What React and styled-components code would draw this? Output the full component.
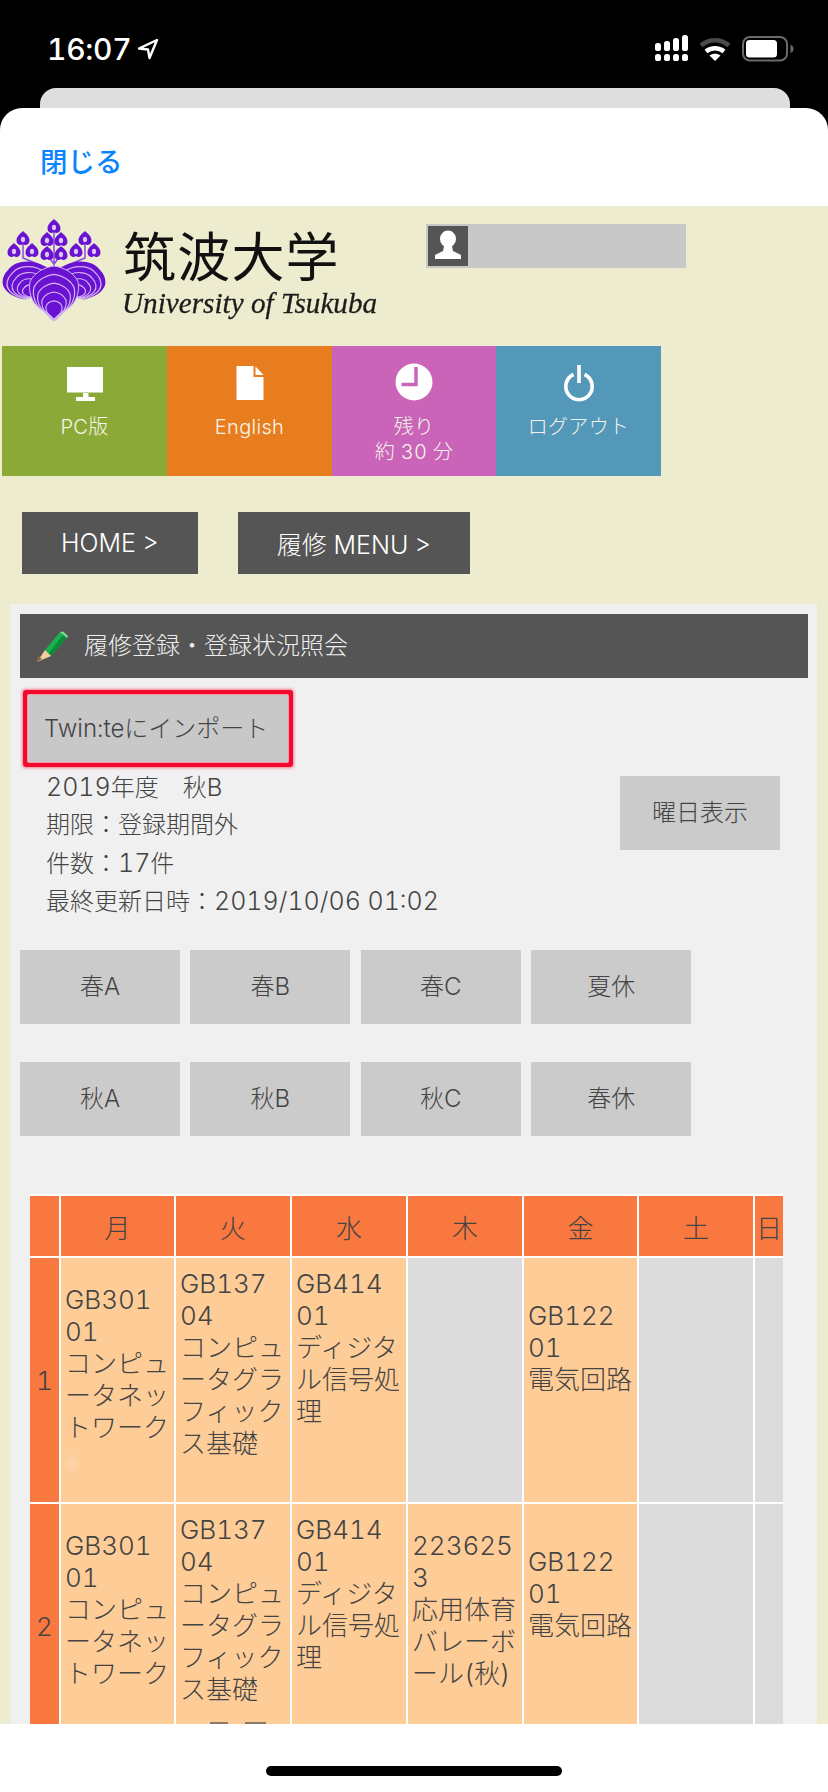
import React from "react";
import styled, { createGlobalStyle } from "styled-components";

const Global = createGlobalStyle`
  html, body { margin: 0; padding: 0; background: #000; }
  * { box-sizing: border-box; }
  body { font-family: Inter, "Noto Sans CJK JP", sans-serif; font-variant-numeric: tabular-nums; }
`;

const Phone = styled.div`
  width: 828px; height: 1792px; background: #000; display: flex; flex-direction: column; overflow: hidden;
`;
const StatusBar = styled.div`
  height: 88px; display: flex; justify-content: space-between; align-items: flex-start; padding: 0 34px 0 47px;
`;
const Clock = styled.div`
  display: flex; align-items: center; gap: 6px; margin-top: 31px; color: #fff;
  font: 500 30px/36px Inter, sans-serif; font-variant-numeric: tabular-nums; letter-spacing: -0.3px;
`;
const StatusIcons = styled.div`
  display: flex; align-items: flex-start; gap: 11px; margin-top: 35px;
`;
const BackCard = styled.div`
  height: 20px; margin: 0 38px 0 40px; background: #dedede; border-radius: 16px 16px 0 0;
`;
const Sheet = styled.div`
  flex: 1; min-height: 0; display: flex; flex-direction: column; background: #fff; border-radius: 22px 22px 0 0; overflow: hidden;
`;
const CloseBar = styled.div`
  height: 98px; flex: none; padding: 33px 0 0 40px;
`;
const CloseLink = styled.span`
  font: 500 27.5px/38px "Noto Sans CJK JP", sans-serif; color: #0a84ff;
`;
const Web = styled.div`
  flex: 1; min-height: 0; overflow: hidden; background: #eeecce;
`;
const HomeArea = styled.div`
  height: 68px; flex: none; display: flex; justify-content: center; padding-top: 42px;
`;
const HomeBar = styled.div`
  width: 296px; height: 10px; border-radius: 5px; background: #000;
`;

const Masthead = styled.div`
  height: 140px; display: flex; align-items: flex-start; padding-left: 2px;
`;
const Brand = styled.div`
  width: 424px; display: flex; margin-top: 12px; filter: blur(0.4px);
`;
const BrandText = styled.div`
  margin-left: 17px; color: #1a1a1a;
`;
const BrandJa = styled.div`
  font: 400 53px/58px "Noto Sans CJK JP", sans-serif; margin-top: 7px; letter-spacing: 1.2px; color: #111;
`;
const BrandEn = styled.div`
  font: italic 400 29.2px/30px "Liberation Serif", serif; margin-top: 5px; margin-left: -1px; color: #1c1c1c; white-space: nowrap; -webkit-text-stroke: 0.3px #1c1c1c;
`;
const UserBox = styled.div`
  width: 260px; height: 44px; margin-top: 18px; background: #c8c8c8; padding: 2px;
`;
const UserIcon = styled.div`
  width: 40px; height: 40px; background: #555;
  svg { display: block; }
`;

const Tiles = styled.div`
  display: flex; height: 130px; padding-left: 2px;
`;
const Tile = styled.div`
  width: ${p => p.$w}px; background: ${p => p.$bg}; display: flex; flex-direction: column; align-items: center; padding-top: 17px;
  color: #f6f4e8; font-size: 20px; line-height: 25px; text-align: center; font-weight: 300; letter-spacing: .3px;
  svg { display: block; margin-bottom: 12px; }
`;

const NavRow = styled.div`
  display: flex; gap: 40px; padding: 36px 0 30px 22px;
`;
const NavButton = styled.div`
  width: ${p => p.$w}px; height: 62px; background: #555; color: #fff; display: flex; align-items: center; justify-content: center;
  font-size: 25px; font-weight: 300;
`;

const Panel = styled.div`
  margin: 0 11px 0 10px; background: #f0f0f0; padding: 10px 9px 0 10px; color: #444;
`;
const PanelHeader = styled.div`
  height: 64px; background: #555; color: #eee; display: flex; align-items: center; padding-left: 16px; gap: 16px;
  font-size: 24px; font-weight: 300;
`;
const PanelTitle = styled.span`
  margin-bottom: 5px;
`;
const TwinButton = styled.div`
  width: 260px; height: 67px; margin: 17px 0 6px 8px; background: #c8c8c8; display: flex; align-items: center; padding: 0 0 5px 16px;
  font-size: 24px; white-space: nowrap; font-weight: 300; border-radius: 1px;
  box-shadow: 0 0 0 1px #f79aa8, 0 0 0 5px #f20a2e, 0 0 3px 6px rgba(255, 50, 80, .6);
`;
const InfoRow = styled.div`
  display: flex; justify-content: space-between; align-items: flex-start; padding: 0 28px 0 26px; height: 182px;
`;
const InfoLines = styled.div`
  font-size: 24px; line-height: 38px; font-weight: 300; white-space: pre;
`;
const InfoLine = styled.div`
  height: 38px;
`;
const Latin = styled.span`
  font-size: 25px;
`;
const GrayButton = styled.div`
  width: 160px; height: 74px; background: #cbcbcb; display: flex; align-items: center; justify-content: center; padding-bottom: 5px;
  font-size: 24px; font-weight: 300; color: #444;
`;
const DayToggle = styled(GrayButton)`
  margin-top: 8px;
`;
const SeasonRow = styled.div`
  display: flex; gap: 10.4px; margin-bottom: 38px;
`;

const Timetable = styled.div`
  margin: 58px 0 0 10px; width: 753px; background: #fff; padding-top: 2px; display: grid; gap: 2px;
  grid-template-columns: 29px 113px 114px 114px 114px 113px 114px 28px;
  grid-template-rows: 60px 244px 244px;
  font-size: 26px; color: #444; font-weight: 300;
`;
const HeadCell = styled.div`
  background: #f8783f; display: flex; align-items: center; justify-content: center; overflow: hidden; white-space: nowrap;
`;
const Cell = styled.div`
  position: relative; background: ${p => (p.$filled ? "#fecc96" : "#dcdcdc")}; display: flex; flex-direction: column; justify-content: center; padding-left: 4px; line-height: 32px; white-space: nowrap; overflow: hidden;
`;
const CellLine = styled.div`
  height: 32px;
`;
const Blotch = styled.div`
  position: absolute; left: 2px; top: 192px; width: 18px; height: 26px;
  background: radial-gradient(closest-side, #fed6ad, rgba(254, 204, 150, 0));
`;
const Smudge = styled.div`
  position: absolute; left: 34px; top: 218px; width: 56px; height: 2px;
  background: linear-gradient(90deg, #8a7a68 0 32%, transparent 32% 62%, #8a7a68 62% 100%);
`;

const tuftPath = (x, y) =>
  `M${x} ${y - 8}C${x + 2.5} ${y - 5.5} ${x + 7} ${y - 3} ${x + 6.4} ${y + 2.5}C${x + 6} ${y + 6} ${x + 2} ${y + 7} ${x} ${y + 5}C${x - 2} ${y + 7} ${x - 6} ${y + 6} ${x - 6.4} ${y + 2.5}C${x - 7} ${y - 3} ${x - 2.5} ${y - 5.5} ${x} ${y - 8}Z`;
const Tuft = ({ x, y }) => (
  <g>
    <path d={tuftPath(x, y)} fill="#6a12d2" />
    <ellipse cx={x} cy={y + 0.5} rx="2.1" ry="2.8" fill="#dcc4f5" />
  </g>
);
const leaf = "M54 111C49 108 45 101 39 98C32 93 28 81 30 72C34 62 46 57 54 56C62 57 74 62 78 72C80 81 76 93 69 98C63 101 59 108 54 111Z";
const side = "M47 58C35 49 16 49 8 60C2 66 1 74 5 79C9 85 16 87 22 89C28 90 31 88 34 84C37 76 43 66 47 58Z";
const Nested = ({ d, ox, oy, scales }) => scales.map(s => (
  <path key={s} d={d} fill="none" stroke="#d2b3f3" strokeWidth={1.2 / s} transform={`translate(${ox} ${oy}) scale(${s}) translate(${-ox} ${-oy})`} />
));
const LogoMark = () => (
  <svg width="104" height="104" viewBox="2 8 104 104" style={{ flex: "none" }}>
    <path d="M54 58V22M47 45L54 54L61 45M23 30V48L47 58M85 30V48L61 58" stroke="#8a48e0" strokeWidth="1.5" fill="none" />
    <g>
      <path d={side} fill="#6a12d2" />
      <Nested d={side} ox={32} oy={86} scales={[0.85, 0.68, 0.5, 0.32]} />
    </g>
    <g transform="translate(108 0) scale(-1 1)">
      <path d={side} fill="#6a12d2" />
      <Nested d={side} ox={32} oy={86} scales={[0.85, 0.68, 0.5, 0.32]} />
    </g>
    <path d={leaf} fill="#6a12d2" stroke="#d2b3f3" strokeWidth="1" />
    <Nested d={leaf} ox={54} oy={108} scales={[0.84, 0.67, 0.5, 0.33]} />
    <Tuft x={54} y={17} />
    <Tuft x={47} y={30} /><Tuft x={61} y={30} />
    <Tuft x={47} y={44} /><Tuft x={61} y={44} />
    <Tuft x={23} y={29} /><Tuft x={14} y={41} /><Tuft x={32} y={41} />
    <Tuft x={85} y={29} /><Tuft x={76} y={41} /><Tuft x={94} y={41} />
  </svg>
);

const PersonIcon = () => (
  <svg width="40" height="40" viewBox="0 0 40 40">
    <ellipse cx="20" cy="13" rx="8" ry="8.5" fill="#fff" />
    <path d="M16 20H24L25 25L33 29V33H7V29L15 25Z" fill="#fff" />
  </svg>
);
const MonitorIcon = () => (
  <svg width="40" height="40" viewBox="0 0 40 40" fill="#fff">
    <rect x="2" y="4" width="36" height="25.5" />
    <rect x="18" y="30" width="5.5" height="4.5" />
    <rect x="11" y="34" width="19" height="4" />
  </svg>
);
const DocIcon = () => (
  <svg width="40" height="40" viewBox="0 0 40 40" fill="#fff">
    <path d="M6.5 3H23.5V14H33.5V37H6.5Z" />
    <path d="M25.5 3.5L33.5 12H25.5Z" />
  </svg>
);
const ClockIcon = () => (
  <svg width="40" height="40" viewBox="0 0 40 40">
    <circle cx="20" cy="19" r="18.5" fill="#fff" />
    <path d="M22 4V21.5H7.5" fill="none" stroke="#c964b9" strokeWidth="3.4" />
  </svg>
);
const PowerIcon = () => (
  <svg width="40" height="40" viewBox="0 0 40 40" fill="none" stroke="#fff" strokeWidth="3.6">
    <path d="M14.5 11.5A13.2 13.2 0 1 0 25.5 11.5" />
    <path d="M20 2V20" />
  </svg>
);
const PencilIcon = () => (
  <svg width="32" height="32" viewBox="0 0 32 32" style={{ flex: "none", filter: "blur(.3px)" }}>
    <path d="M9 20L24 2L31 8L15 26Z" fill="#16b24c" />
    <path d="M13 23L27 5L31 8L15 26Z" fill="#0c8a38" />
    <path d="M24 2L27 1.5L32 6L31 8Z" fill="#7fdc9a" />
    <path d="M9 20L15 26L1 32Z" fill="#f3cf9f" />
    <path d="M1 32L2 26L6 29Z" fill="#8a6a45" />
  </svg>
);
const ArrowIcon = () => (
  <svg width="22" height="22" viewBox="0 0 22 22" fill="none" stroke="#fff" strokeWidth="2.4" strokeLinejoin="round">
    <path d="M20 2L2 10.5L11 11.5L12.5 20Z" />
  </svg>
);
const SignalIcon = () => (
  <svg width="33" height="26" viewBox="0 0 33 26" fill="#fff">
    {[[0, 8], [9, 6], [18, 3], [27, 0]].map(([x, y]) => (
      <g key={x}>
        <rect x={x} y={y} width="6" height={16 - y} rx="2.6" />
        <rect x={x} y="19" width="6" height="7" rx="2.6" />
      </g>
    ))}
  </svg>
);
const WifiIcon = () => (
  <svg width="32" height="26" viewBox="0 0 32 26" fill="none" style={{ marginTop: 2 }}>
    <path d="M2 8.5C10 1.5 22 1.5 30 8.5" stroke="#4a4a4a" strokeWidth="4.4" />
    <path d="M7 14.5C12 10.2 20 10.2 25 14.5" stroke="#fff" strokeWidth="4.4" />
    <path d="M16 24L10.5 18.5C13.5 16 18.5 16 21.5 18.5Z" fill="#fff" />
  </svg>
);
const BatteryIcon = () => (
  <svg width="52" height="26" viewBox="0 0 52 26" style={{ marginTop: 1 }}>
    <rect x="1" y="1" width="44" height="23.5" rx="7" fill="none" stroke="#6a6a6a" strokeWidth="2" />
    <rect x="4" y="4" width="31" height="17.5" rx="3.5" fill="#fff" />
    <path d="M48.5 9C50.5 9.5 51.5 11 51.5 13C51.5 15 50.5 16 48.5 17Z" fill="#6a6a6a" />
  </svg>
);

const days = ["月", "火", "水", "木", "金", "土", "日"];
const network = ["GB301", "01", "コンピュ", "ータネッ", "トワーク", ""];
const graphics = ["GB137", "04", "コンピュ", "ータグラ", "フィック", "ス基礎", ""];
const signal = ["GB414", "01", "ディジタ", "ル信号処", "理", "", ""];
const circuit = ["GB122", "01", "電気回路", "", ""];
const volley = ["223625", "3", "応用体育", "バレーボ", "ール(秋)", ""];
const rows = [
  { no: "1", cells: [network, graphics, signal, null, circuit, null, null], overlays: { 0: <Blotch /> } },
  { no: "2", cells: [network, graphics, signal, volley, circuit, null, null], overlays: { 1: <Smudge /> } },
];
const seasons = [["春A", "春B", "春C", "夏休"], ["秋A", "秋B", "秋C", "春休"]];
const tiles = [
  { w: 165, bg: "#8aa936", icon: <MonitorIcon />, label: ["PC版"] },
  { w: 165, bg: "#e87d20", icon: <DocIcon />, label: ["English"] },
  { w: 164, bg: "#c964b9", icon: <ClockIcon />, label: ["残り", "約 30 分"] },
  { w: 165, bg: "#5498b9", icon: <PowerIcon />, label: ["ログアウト"] },
];

export default function App() {
  return (
    <Phone>
      <Global />
      <StatusBar>
        <Clock>16:07<ArrowIcon /></Clock>
        <StatusIcons><SignalIcon /><WifiIcon /><BatteryIcon /></StatusIcons>
      </StatusBar>
      <BackCard />
      <Sheet>
        <CloseBar><CloseLink>閉じる</CloseLink></CloseBar>
        <Web>
          <Masthead>
            <Brand>
              <LogoMark />
              <BrandText>
                <BrandJa>筑波大学</BrandJa>
                <BrandEn>University of Tsukuba</BrandEn>
              </BrandText>
            </Brand>
            <UserBox><UserIcon><PersonIcon /></UserIcon></UserBox>
          </Masthead>
          <Tiles>
            {tiles.map(t => (
              <Tile key={t.label[0]} $w={t.w} $bg={t.bg}>
                {t.icon}
                {t.label.map(l => <div key={l}>{l}</div>)}
              </Tile>
            ))}
          </Tiles>
          <NavRow>
            <NavButton $w={176}>HOME &gt;</NavButton>
            <NavButton $w={232}>履修 MENU &gt;</NavButton>
          </NavRow>
          <Panel>
            <PanelHeader><PencilIcon /><PanelTitle>履修登録・登録状況照会</PanelTitle></PanelHeader>
            <TwinButton>Twin:teにインポート</TwinButton>
            <InfoRow>
              <InfoLines>
                <InfoLine><Latin>2019</Latin>年度　秋B</InfoLine>
                <InfoLine>期限：登録期間外</InfoLine>
                <InfoLine>件数：<Latin>17</Latin>件</InfoLine>
                <InfoLine>最終更新日時：<Latin>2019/10/06 01:02</Latin></InfoLine>
              </InfoLines>
              <DayToggle>曜日表示</DayToggle>
            </InfoRow>
            {seasons.map(row => (
              <SeasonRow key={row[0]}>
                {row.map(s => <GrayButton key={s}>{s}</GrayButton>)}
              </SeasonRow>
            ))}
            <Timetable>
              <HeadCell />
              {days.map(d => <HeadCell key={d}>{d}</HeadCell>)}
              {rows.map(r => (
                <React.Fragment key={r.no}>
                  <HeadCell>{r.no}</HeadCell>
                  {r.cells.map((lines, i) => (
                    <Cell key={i} $filled={!!lines}>
                      {lines && lines.map((l, j) => <CellLine key={j}>{l}</CellLine>)}
                      {r.overlays[i]}
                    </Cell>
                  ))}
                </React.Fragment>
              ))}
            </Timetable>
          </Panel>
        </Web>
        <HomeArea><HomeBar /></HomeArea>
      </Sheet>
    </Phone>
  );
}
